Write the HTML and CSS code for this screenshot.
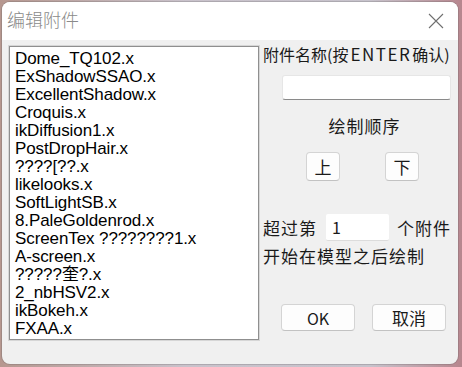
FILE: index.html
```html
<!DOCTYPE html>
<html lang="zh-CN">
<head>
  <meta charset="UTF-8" />
  <title>编辑附件</title>
  <link rel="stylesheet" href="styles.css">
</head>
<body>
  <div class="window">
    <div class="titlebar">
      <span class="title">编辑附件</span>
      <svg class="close" width="16" height="16" viewBox="0 0 16 16">
        <path d="M1 1 L15 15 M15 1 L1 15" stroke="#6f6f6f" stroke-width="1.1" fill="none"/>
      </svg>
    </div>

    <div class="client">
      <ul class="listbox">
        <li>Dome_TQ102.x</li>
        <li>ExShadowSSAO.x</li>
        <li>ExcellentShadow.x</li>
        <li>Croquis.x</li>
        <li>ikDiffusion1.x</li>
        <li>PostDropHair.x</li>
        <li>????[??.x</li>
        <li>likelooks.x</li>
        <li>SoftLightSB.x</li>
        <li>8.PaleGoldenrod.x</li>
        <li>ScreenTex ????????1.x</li>
        <li>A-screen.x</li>
        <li>?????奎?.x</li>
        <li>2_nbHSV2.x</li>
        <li>ikBokeh.x</li>
        <li>FXAA.x</li>
      </ul>

      <div class="panel">
        <div class="name-label">附件名称(按<span class="latin">ENTER</span>确认)</div>
        <input class="name-input" type="text">

        <div class="order-label">绘制顺序</div>
        <div class="order-buttons">
          <button class="btn small">上</button>
          <button class="btn small">下</button>
        </div>

        <div class="after-row">
          <span>超过第</span>
          <input class="count-input" type="text" value="1">
          <span>个附件</span>
        </div>
        <div class="after-label">开始在模型之后绘制</div>

        <div class="dialog-buttons">
          <button class="btn wide ok">OK</button>
          <button class="btn wide">取消</button>
        </div>
      </div>
    </div>
  </div>
</body>
</html>
```

FILE: styles.css
```css
body {
  margin: 0;
  width: 462px;
  height: 367px;
  overflow: hidden;
  background: linear-gradient(90deg, #b6978f, #c9c2cb 40%, #c7c3cc 80%, #b7868e);
  font-family: "Noto Sans CJK SC", "Liberation Sans", sans-serif;
}

.window {
  margin: 2px;
  width: 456px;
  height: 362px;
  border-radius: 8px;
  background: #f0f0f0;
  overflow: hidden;
  box-shadow: 0 0 0 1px rgba(90, 90, 90, 0.25);
}

.titlebar {
  height: 38px;
  background: #ffffff;
  display: flex;
  align-items: center;
  justify-content: space-between;
  padding: 0 14px 4px 5px;
  box-sizing: border-box;
}

.title {
  font-size: 18px;
  line-height: 22px;
  color: #8a8a8a;
  font-weight: 300;
}

.close {
  display: block;
  margin-top: 4px;
}

.client {
  display: flex;
  padding: 6px 0 0 7px;
}

.listbox {
  flex: none;
  list-style: none;
  margin: 0;
  padding: 3px 0 0 5px;
  width: 250px;
  height: 294px;
  box-sizing: border-box;
  background: #ffffff;
  border: 1px solid #8f8f8f;
  box-shadow: 0 0 0 1px #d6d6d6;
  font-family: "Liberation Sans", sans-serif;
  font-size: 17px;
  letter-spacing: -0.1px;
  line-height: 18px;
  color: #000;
  overflow: hidden;
}

.listbox li {
  white-space: nowrap;
}

.panel {
  display: flex;
  flex-direction: column;
  margin-left: 4px;
  margin-top: -2px;
  width: 200px;
  font-size: 17px;
  line-height: 20px;
  color: #1a1a1a;
}

.name-label {
  font-size: 16px;
  white-space: nowrap;
}

.name-label .latin {
  font-size: 17px;
  letter-spacing: 1.5px;
  margin: 0 1px 0 2px;
}

.name-input {
  margin: 11px 0 0 19px;
  width: 169px;
  height: 25px;
  box-sizing: border-box;
  border: 1px solid #e6e6e6;
  border-bottom: 1px solid #8a8a8a;
  border-radius: 3px;
  background: #ffffff;
  outline: none;
}

.order-label {
  margin: 16px 0 0 19px;
  width: 165px;
  text-align: center;
  letter-spacing: 1px;
}

.order-buttons {
  display: flex;
  gap: 45px;
  margin: 16px 0 0 43px;
}

.btn {
  font-family: "Noto Sans CJK SC", "Liberation Sans", sans-serif;
  font-size: 17px;
  color: #1a1a1a;
  background: #fdfdfd;
  border: 1px solid #d4d4d4;
  border-bottom-color: #c2c2c2;
  border-radius: 4px;
  padding: 0;
  line-height: 20px;
}

.btn.small {
  width: 34px;
  height: 29px;
}

.btn.wide {
  width: 74px;
  height: 27px;
}

.btn.ok {
  font-size: 16px;
}

.after-row {
  display: flex;
  align-items: center;
  margin-top: 33px;
  letter-spacing: 1px;
}

.count-input {
  margin: 0 8px 0 9px;
  width: 63px;
  height: 27px;
  box-sizing: border-box;
  border: none;
  border-bottom: 1px solid #dcdcdc;
  border-radius: 2px;
  background: #ffffff;
  padding: 0 6px;
  font-family: "Noto Sans CJK SC", sans-serif;
  font-size: 16px;
  color: #1a1a1a;
  outline: none;
}

.after-label {
  margin-top: 5px;
  letter-spacing: 1px;
  white-space: nowrap;
}

.dialog-buttons {
  display: flex;
  gap: 17px;
  margin: 38px 0 0 18px;
}
```
